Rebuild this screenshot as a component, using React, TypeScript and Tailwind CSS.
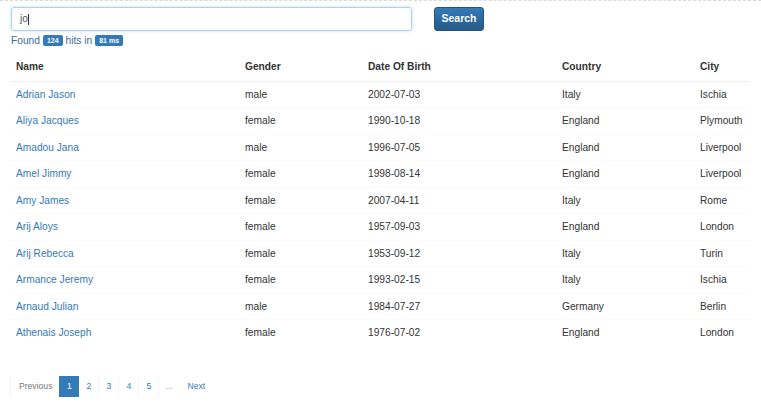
import React from 'react'

const rows = [
  ['Adrian Jason', 'male', '2002-07-03', 'Italy', 'Ischia'],
  ['Aliya Jacques', 'female', '1990-10-18', 'England', 'Plymouth'],
  ['Amadou Jana', 'male', '1996-07-05', 'England', 'Liverpool'],
  ['Amel Jimmy', 'female', '1998-08-14', 'England', 'Liverpool'],
  ['Amy James', 'female', '2007-04-11', 'Italy', 'Rome'],
  ['Arij Aloys', 'female', '1957-09-03', 'England', 'London'],
  ['Arij Rebecca', 'female', '1953-09-12', 'Italy', 'Turin'],
  ['Armance Jeremy', 'female', '1993-02-15', 'Italy', 'Ischia'],
  ['Arnaud Julian', 'male', '1984-07-27', 'Germany', 'Berlin'],
  ['Athenais Joseph', 'female', '1976-07-02', 'England', 'London'],
]

export default function App() {
  return (
    <div className="w-[761px] h-[412px] bg-white text-[#333] text-[10.2px] font-['Liberation_Sans',Arial,sans-serif] border-t border-dashed border-[#d8d8d8] overflow-hidden">
      {/* Search bar */}
      <div className="flex items-center pl-[11px] pt-[6px]">
        <div className="w-[401px] h-[24px] border border-[#a9d3f2] rounded-[3px] shadow-[0_0_3px_rgba(102,175,233,0.45)] flex items-center pl-[8px] text-[#555]">
          jo<span className="w-px h-[11px] bg-[#333]" />
        </div>
        <button className="ml-[22px] w-[50px] h-[24px] rounded-[3px] text-white font-bold text-[10.5px] bg-gradient-to-b from-[#337ab7] to-[#265a88] border border-[#245580]">
          Search
        </button>
      </div>
      <div className="flex items-center pl-[11px] mt-[3px] h-[13px] text-[#3a6d99]">
        Found
        <span className="mx-[3px] bg-[#337ab7] text-white font-bold text-[7px] rounded-[2px] px-[4px] h-[11px] leading-[11px]">124</span>
        hits in
        <span className="mx-[3px] bg-[#337ab7] text-white font-bold text-[7px] rounded-[2px] px-[4px] h-[11px] leading-[11px]">81 ms</span>
      </div>

      {/* Table */}
      <table className="ml-[10px] mt-[6px] w-[740px] border-collapse table-fixed">
        <colgroup>
          <col className="w-[229px]" />
          <col className="w-[123px]" />
          <col className="w-[194px]" />
          <col className="w-[138px]" />
          <col />
        </colgroup>
        <thead>
          <tr className="h-[28px] border-b border-[#f0f0f0]">
            {['Name', 'Gender', 'Date Of Birth', 'Country', 'City'].map((h) => (
              <th key={h} className="text-left font-bold px-[6px]">{h}</th>
            ))}
          </tr>
        </thead>
        <tbody>
          {rows.map((r) => (
            <tr key={r[0]} className="h-[26.5px] border-t border-[#fafafa]">
              <td className="px-[6px] text-[#337ab7]">{r[0]}</td>
              <td className="px-[6px]">{r[1]}</td>
              <td className="px-[6px]">{r[2]}</td>
              <td className="px-[6px]">{r[3]}</td>
              <td className="px-[6px]">{r[4]}</td>
            </tr>
          ))}
        </tbody>
      </table>

      {/* Pagination */}
      <div className="flex ml-[10px] mt-[30px] h-[21px] text-[8.6px]">
        <span className="flex items-center pl-[8px] pr-[7px] border-l border-[#f4f4f4] text-[#777]">Previous</span>
        <span className="flex items-center justify-center w-[20px] bg-[#337ab7] text-white">1</span>
        {['2', '3', '4', '5'].map((n) => (
          <span key={n} className="flex items-center justify-center w-[20px] border-r border-[#f6f6f6] text-[#337ab7]">{n}</span>
        ))}
        <span className="flex items-center justify-center w-[20px] text-[#aaa]">...</span>
        <span className="flex items-center pl-[8px] pr-[4px] text-[#337ab7]">Next</span>
      </div>
    </div>
  )
}
